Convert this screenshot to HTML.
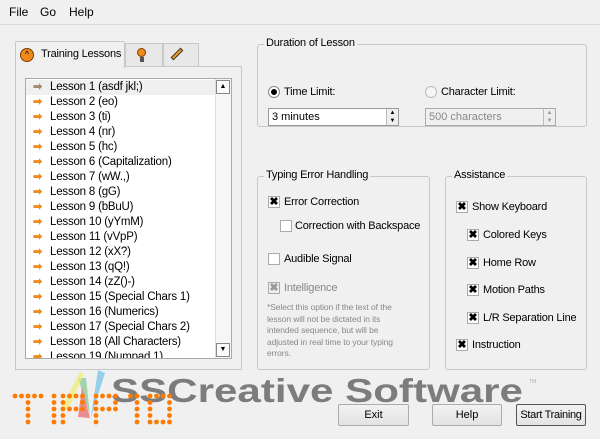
<!DOCTYPE html>
<html><head><meta charset="utf-8"><style>
*{box-sizing:border-box;margin:0;padding:0}
body{width:600px;height:439px;background:#f0f0f0;font-family:"Liberation Sans",sans-serif;font-size:11px;color:#000;position:relative;overflow:hidden}
.abs{position:absolute}
.menu span{position:absolute;top:5px;font-size:12px}
.grp{position:absolute;border:1px solid #c8c8c8;border-radius:3px}
.gt{position:absolute;top:-8px;left:6px;background:#f0f0f0;padding:0 2px;font-size:11px;letter-spacing:-0.2px}
.cb{position:absolute;width:12px;height:12px;border:1px solid #aaa;background:#fff;font-size:11px;line-height:10px;text-align:center;font-weight:bold}
.lbl{position:absolute;font-size:11px;letter-spacing:-0.2px}
.row{position:absolute;left:0;width:189px;height:15px;font-size:11.5px;line-height:15px;padding-left:24px;letter-spacing:-0.2px}
.row i{position:absolute;left:7px;top:0;color:#f08a1c;font-style:normal;font-weight:bold;font-size:11px}
.btn{position:absolute;height:22px;border:1px solid #acacac;border-radius:2px;background:linear-gradient(#f2f2f2,#e3e3e3);text-align:center;line-height:20px;font-size:11px}
.spin{position:absolute;height:18px;border:1px solid #999;background:#fff;font-size:11px;line-height:16px;padding-left:3px}
.sa{position:absolute;right:0;top:0;width:12px;height:16px;border-left:1px solid #bbb;background:#eee;font-size:6px;line-height:8px;text-align:center}
</style></head><body>
<div class="menu"><span style="left:9px">File</span><span style="left:40px">Go</span><span style="left:69px">Help</span></div>
<div class="abs" style="left:0;top:24px;width:600px;height:1px;background:#dadada"></div>

<div class="abs" style="left:15px;top:66px;width:227px;height:304px;border:1px solid #c8c8c8;background:#f0f0f0"></div>
<div class="abs" style="left:15px;top:41px;width:110px;height:27px;border:1px solid #c8c8c8;border-bottom:none;background:#f0f0f0;border-radius:2px 2px 0 0"></div>
<div class="abs" style="left:20px;top:48px;width:14px;height:14px;border-radius:50%;background:#f08a1c;border:1px solid #7a3c00;font-size:9px;line-height:11px;text-align:center">^</div>
<div class="abs" style="left:41px;top:48px;font-size:11px;letter-spacing:-0.2px">Training Lessons</div>
<div class="abs" style="left:125px;top:43px;width:38px;height:23px;border:1px solid #c8c8c8;border-bottom:none;background:#e8e8e8"></div>
<div class="abs" style="left:137px;top:48px;width:9px;height:9px;border-radius:50%;background:#f08a1c;border:1px solid #7a3c00"></div>
<div class="abs" style="left:140px;top:57px;width:4px;height:5px;background:#555"></div>
<div class="abs" style="left:163px;top:43px;width:36px;height:23px;border:1px solid #c8c8c8;border-bottom:none;background:#e8e8e8"></div>
<div class="abs" style="left:170px;top:52px;width:14px;height:4px;background:#f0a020;border:1px solid #333;transform:rotate(-45deg)"></div>

<div class="abs" style="left:25px;top:78px;width:207px;height:281px;border:1px solid #aaa;background:#fff;overflow:hidden">
<div class="row" style="top:1px;background:#f0f0f0"><i style="color:#a08a70">➡</i>Lesson 1 (asdf jkl;)</div>
<div class="row" style="top:16px"><i>➡</i>Lesson 2 (eo)</div>
<div class="row" style="top:31px"><i>➡</i>Lesson 3 (ti)</div>
<div class="row" style="top:46px"><i>➡</i>Lesson 4 (nr)</div>
<div class="row" style="top:61px"><i>➡</i>Lesson 5 (hc)</div>
<div class="row" style="top:76px"><i>➡</i>Lesson 6 (Capitalization)</div>
<div class="row" style="top:91px"><i>➡</i>Lesson 7 (wW.,)</div>
<div class="row" style="top:106px"><i>➡</i>Lesson 8 (gG)</div>
<div class="row" style="top:121px"><i>➡</i>Lesson 9 (bBuU)</div>
<div class="row" style="top:136px"><i>➡</i>Lesson 10 (yYmM)</div>
<div class="row" style="top:151px"><i>➡</i>Lesson 11 (vVpP)</div>
<div class="row" style="top:166px"><i>➡</i>Lesson 12 (xX?)</div>
<div class="row" style="top:181px"><i>➡</i>Lesson 13 (qQ!)</div>
<div class="row" style="top:196px"><i>➡</i>Lesson 14 (zZ()-)</div>
<div class="row" style="top:211px"><i>➡</i>Lesson 15 (Special Chars 1)</div>
<div class="row" style="top:226px"><i>➡</i>Lesson 16 (Numerics)</div>
<div class="row" style="top:241px"><i>➡</i>Lesson 17 (Special Chars 2)</div>
<div class="row" style="top:256px"><i>➡</i>Lesson 18 (All Characters)</div>
<div class="row" style="top:271px"><i>➡</i>Lesson 19 (Numpad 1)</div>
</div>
<div class="abs" style="left:215px;top:79px;width:16px;height:279px;background:#f6f6f6;border-left:1px solid #ddd"></div>
<div class="abs" style="left:216px;top:80px;width:14px;height:14px;border:1px solid #888;background:#fafafa;font-size:7px;text-align:center;line-height:12px">▲</div>
<div class="abs" style="left:216px;top:343px;width:14px;height:14px;border:1px solid #888;background:#fafafa;font-size:7px;text-align:center;line-height:12px">▼</div>

<div class="grp" style="left:257px;top:44px;width:330px;height:83px"><div class="gt">Duration of Lesson</div></div>
<div class="abs" style="left:268px;top:86px;width:12px;height:12px;border-radius:50%;border:1px solid #888;background:#fff"><div class="abs" style="left:2px;top:2px;width:6px;height:6px;border-radius:50%;background:#000"></div></div>
<div class="lbl" style="left:284px;top:86px">Time Limit:</div>
<div class="abs" style="left:425px;top:86px;width:12px;height:12px;border-radius:50%;border:1px solid #bbb;background:#f6f6f6"></div>
<div class="lbl" style="left:441px;top:86px">Character Limit:</div>
<div class="spin" style="left:268px;top:108px;width:131px">3 minutes<div class="sa">▲<br>▼</div></div>
<div class="spin" style="left:425px;top:108px;width:131px;background:#f0f0f0;color:#888;border-color:#aaa">500 characters<div class="sa" style="color:#999">▲<br>▼</div></div>

<div class="grp" style="left:257px;top:176px;width:173px;height:194px"><div class="gt">Typing Error Handling</div></div>
<div class="cb" style="left:268px;top:196px">✖</div><div class="lbl" style="left:284px;top:196px">Error Correction</div>
<div class="cb" style="left:280px;top:220px"></div><div class="lbl" style="left:295px;top:220px">Correction with Backspace</div>
<div class="cb" style="left:268px;top:253px"></div><div class="lbl" style="left:284px;top:253px">Audible Signal</div>
<div class="cb" style="left:268px;top:282px;color:#999;background:#eee">✖</div><div class="lbl" style="left:284px;top:282px;color:#888">Intelligence</div>
<div class="lbl" style="left:267px;top:302px;width:165px;font-size:8.5px;line-height:11.5px;color:#888;white-space:nowrap;letter-spacing:-0.1px">*Select this option if the text of the<br>lesson will not be dictated in its<br>intended sequence, but will be<br>adjusted in real time to your typing<br>errors.</div>

<div class="grp" style="left:445px;top:176px;width:142px;height:194px"><div class="gt">Assistance</div></div>
<div class="cb" style="left:456px;top:201px">✖</div><div class="lbl" style="left:472px;top:201px">Show Keyboard</div>
<div class="cb" style="left:467px;top:229px">✖</div><div class="lbl" style="left:483px;top:229px">Colored Keys</div>
<div class="cb" style="left:467px;top:257px">✖</div><div class="lbl" style="left:483px;top:257px">Home Row</div>
<div class="cb" style="left:467px;top:284px">✖</div><div class="lbl" style="left:483px;top:284px">Motion Paths</div>
<div class="cb" style="left:467px;top:312px">✖</div><div class="lbl" style="left:483px;top:312px">L/R Separation Line</div>
<div class="cb" style="left:456px;top:339px">✖</div><div class="lbl" style="left:472px;top:339px">Instruction</div>

<svg class="abs" style="left:0;top:360px" width="600" height="79">
<polygon points="78,18 86,18 90,55" fill="#7cc890" opacity=".7"/>
<polygon points="98,10 105,13 91,57" fill="#6cc0e8" opacity=".7"/>
<polygon points="80,12 84,14 68,50 62,46" fill="#f0ec70" opacity=".7"/>
<polygon points="82,27 90,58 78,57" fill="#e8606a" opacity=".7"/>
<text x="111" y="42" font-family="Liberation Sans" font-weight="bold" font-size="33" fill="#7c7c7c" textLength="412" lengthAdjust="spacingAndGlyphs">SSCreative Software</text>
<text x="529" y="23" font-family="Liberation Sans" font-size="5" fill="#aaa">TM</text>
<g fill="#ff7b00">
<circle cx="15" cy="36" r="2.4"/><circle cx="21.5" cy="36" r="2.4"/><circle cx="28" cy="36" r="2.4"/><circle cx="34.5" cy="36" r="2.4"/><circle cx="41" cy="36" r="2.4"/>
<circle cx="28" cy="42.5" r="2.4"/><circle cx="28" cy="49" r="2.4"/><circle cx="28" cy="55.5" r="2.4"/><circle cx="28" cy="62" r="2.4"/>
<circle cx="54" cy="36" r="2.4"/><circle cx="54" cy="42.5" r="2.4"/><circle cx="54" cy="49" r="2.4"/><circle cx="54" cy="55.5" r="2.4"/><circle cx="54" cy="62" r="2.4"/>
<circle cx="63" cy="36" r="2.4"/><circle cx="63" cy="42.5" r="2.4"/><circle cx="63" cy="49" r="2.4"/><circle cx="63" cy="55.5" r="2.4"/><circle cx="63" cy="62" r="2.4"/>
<circle cx="69.5" cy="36" r="2.4"/><circle cx="76" cy="36" r="2.4"/><circle cx="82.5" cy="36" r="2.4"/><circle cx="82.5" cy="42.5" r="2.4"/><circle cx="82.5" cy="49" r="2.4"/><circle cx="69.5" cy="49" r="2.4"/><circle cx="76" cy="49" r="2.4"/>
<circle cx="96" cy="36" r="2.4"/><circle cx="96" cy="42.5" r="2.4"/><circle cx="96" cy="49" r="2.4"/><circle cx="96" cy="55.5" r="2.4"/><circle cx="96" cy="62" r="2.4"/>
<circle cx="102.5" cy="36" r="2.4"/><circle cx="109" cy="36" r="2.4"/><circle cx="115.5" cy="36" r="2.4"/><circle cx="115.5" cy="42.5" r="2.4"/><circle cx="115.5" cy="49" r="2.4"/><circle cx="102.5" cy="49" r="2.4"/><circle cx="109" cy="49" r="2.4"/>
<circle cx="130.5" cy="36" r="2.4"/><circle cx="137" cy="36" r="2.4"/><circle cx="137" cy="42.5" r="2.4"/><circle cx="137" cy="49" r="2.4"/><circle cx="137" cy="55.5" r="2.4"/><circle cx="137" cy="62" r="2.4"/>
<circle cx="150" cy="36" r="2.4"/><circle cx="156.5" cy="36" r="2.4"/><circle cx="163" cy="36" r="2.4"/><circle cx="169.5" cy="36" r="2.4"/>
<circle cx="150" cy="62" r="2.4"/><circle cx="156.5" cy="62" r="2.4"/><circle cx="163" cy="62" r="2.4"/><circle cx="169.5" cy="62" r="2.4"/>
<circle cx="150" cy="42.5" r="2.4"/><circle cx="150" cy="49" r="2.4"/><circle cx="150" cy="55.5" r="2.4"/>
<circle cx="169.5" cy="42.5" r="2.4"/><circle cx="169.5" cy="49" r="2.4"/><circle cx="169.5" cy="55.5" r="2.4"/>
</g>
</svg>

<div class="btn" style="left:338px;top:404px;width:71px">Exit</div>
<div class="btn" style="left:432px;top:404px;width:70px">Help</div>
<div class="btn" style="left:516px;top:404px;width:70px;border-color:#555;letter-spacing:-0.3px">Start Training</div>
</body></html>
